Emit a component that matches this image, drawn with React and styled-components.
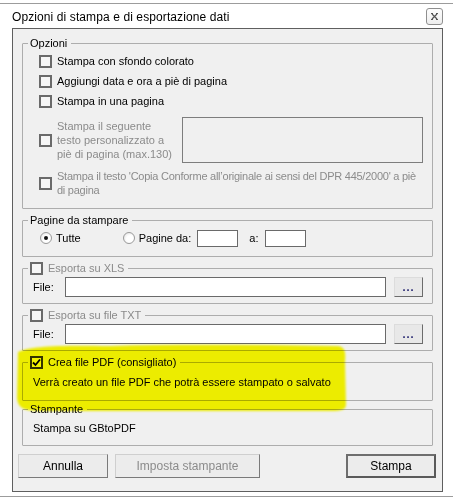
import styled, { createGlobalStyle } from "styled-components";

const GlobalStyle = createGlobalStyle`
  html, body {
    margin: 0;
    padding: 0;
    background: #ffffff;
  }
  body {
    font-family: "Liberation Sans", Arial, sans-serif;
    font-size: 11px;
    color: #000;
  }
`;

const Window = styled.div`
  position: relative;
  width: 453px;
  height: 499px;
  overflow: hidden;
  background: #ffffff;
  box-sizing: border-box;
  padding-top: 3px;
`;

const Frame = styled.div`
  border-top: 1px solid #9c9c9c;
  border-bottom: 1px solid #9c9c9c;
  padding-bottom: 4px;
`;

const TitleBar = styled.div`
  height: 24px;
  display: flex;
  align-items: center;
  padding: 0 10px 0 12px;
`;

const Title = styled.div`
  flex: 1;
  font-size: 12px;
  letter-spacing: 0.1px;
  color: #000;
  padding-top: 1px;
`;

const CloseBtn = styled.div`
  width: 15px;
  height: 15px;
  border: 1px solid #8f8f8f;
  border-radius: 3px;
  background: linear-gradient(#fdfdfd, #eeeeee);
  display: flex;
  align-items: center;
  justify-content: center;
  margin-top: 1px;
`;

const Panel = styled.div`
  margin: 0 10px 0 12px;
  height: 464px;
  box-sizing: border-box;
  border: 1px solid #5f5f5f;
  background: #f0f0f0;
  padding: 7px 9px 0 9px;
  display: flex;
  flex-direction: column;
`;

const Group = styled.fieldset`
  margin: 0 0 ${(p) => p.$gap ?? 4}px 0;
  padding: 0;
  min-width: 0;
  border: 1px solid #adadad;
  border-radius: 1px;
`;

const Legend = styled.legend`
  margin-left: 5px;
  padding: 0 4px 0 2px;
  height: 14px;
  line-height: 14px;
  display: flex;
  align-items: center;
  gap: 5px;
  color: ${(p) => (p.$disabled ? "#8b8b8b" : "#000")};
`;

const Body = styled.div`
  padding: ${(p) => p.$pad || "0 9px 0 10px"};
  display: flex;
  flex-direction: column;
`;

const Row = styled.div`
  display: flex;
  align-items: center;
  gap: ${(p) => p.$gap ?? 5}px;
  height: ${(p) => p.$h}px;
  margin-top: ${(p) => p.$mt ?? 0}px;
`;

const Label = styled.span`
  line-height: 14px;
  white-space: nowrap;
  color: ${(p) => (p.$disabled ? "#8b8b8b" : "#000")};
  width: ${(p) => (p.$w ? p.$w + "px" : "auto")};
  margin-left: ${(p) => p.$ml ?? 0}px;
  letter-spacing: ${(p) => p.$ls ?? 0}px;
`;

const Box = styled.span`
  flex: none;
  width: 13px;
  height: 13px;
  box-sizing: border-box;
  border: 2px solid ${(p) => (p.$checked ? "#333" : "#6a6a6a")};
  background: #f6f6f6;
  display: flex;
  align-items: center;
  justify-content: center;
`;

const Radio = styled.span`
  flex: none;
  width: 12px;
  height: 12px;
  box-sizing: border-box;
  border-radius: 50%;
  border: 1px solid #9a9a9a;
  background: radial-gradient(circle at 60% 60%, #ffffff 40%, #dcdcdc 100%);
  display: flex;
  align-items: center;
  justify-content: center;
  margin-left: ${(p) => p.$ml ?? 0}px;
  &::after {
    content: "";
    width: 4px;
    height: 4px;
    border-radius: 50%;
    background: ${(p) => (p.$on ? "#111" : "transparent")};
  }
`;

const Input = styled.span`
  flex: none;
  width: ${(p) => p.$w}px;
  height: ${(p) => p.$h}px;
  box-sizing: border-box;
  margin-left: ${(p) => p.$ml ?? 0}px;
  border: 1px solid ${(p) => (p.$disabled ? "#7d7d7d" : "#6a6a6a")};
  background: ${(p) => (p.$disabled ? "#f0f0f0" : "#ffffff")};
`;

const SmallBtn = styled.span`
  flex: none;
  width: 29px;
  height: 20px;
  box-sizing: border-box;
  margin-left: 8px;
  border: 1px solid #dcdcdc;
  border-right-color: #6c6c6c;
  border-bottom-color: #6c6c6c;
  background: #e8e8e8;
  display: flex;
  align-items: center;
  justify-content: center;
  font-weight: bold;
  letter-spacing: 1px;
  color: #1a1a6a;
  line-height: 8px;
`;

const Buttons = styled.div`
  display: flex;
  align-items: center;
  margin: 8px -3px 0 -4px;
  gap: 7px;
`;

const Button = styled.span`
  width: ${(p) => p.$w}px;
  height: 24px;
  box-sizing: border-box;
  border: 1px solid #cfcfcf;
  border-right-color: #7a7a7a;
  border-bottom-color: #7a7a7a;
  background: #ececec;
  display: flex;
  align-items: center;
  justify-content: center;
  font-size: 12px;
  color: ${(p) => (p.$disabled ? "#8b8b8b" : "#000")};
  margin-left: ${(p) => (p.$push ? "auto" : "0")};
  ${(p) =>
    p.$default &&
    `
    border: 2px solid #5a5a5a;
    border-top-color: #6e6e6e;
    border-left-color: #6e6e6e;
  `}
`;

const Highlight = styled.svg`
  position: absolute;
  left: 0;
  top: 0;
  width: 453px;
  height: 499px;
  pointer-events: none;
  mix-blend-mode: multiply;
`;

const Check = () => (
  <svg width="9" height="9" viewBox="0 0 9 9">
    <path d="M1 4.5 L3.5 7 L8 1.5" fill="none" stroke="#000" strokeWidth="1.8" />
  </svg>
);

const CheckBox = ({ checked }) => <Box $checked={checked}>{checked && <Check />}</Box>;

export default function App() {
  return (
    <>
      <GlobalStyle />
      <Window>
        <Frame>
          <TitleBar>
            <Title>Opzioni di stampa e di esportazione dati</Title>
            <CloseBtn>
              <svg width="7" height="7" viewBox="0 0 7 7">
                <path d="M1 1 L6 6 M6 1 L1 6" stroke="#555" strokeWidth="1.2" />
                <path d="M0 0.5 h2 M5 0.5 h2 M0 6.5 h2 M5 6.5 h2" stroke="#555" strokeWidth="1" />
              </svg>
            </CloseBtn>
          </TitleBar>

          <Panel>
            <Group $gap={4}>
              <Legend>Opzioni</Legend>
              <Body $pad="1px 9px 10px 16px">
                <Row $h={20}>
                  <CheckBox />
                  <Label>Stampa con sfondo colorato</Label>
                </Row>
                <Row $h={20}>
                  <CheckBox />
                  <Label>Aggiungi data e ora a piè di pagina</Label>
                </Row>
                <Row $h={20}>
                  <CheckBox />
                  <Label>Stampa in una pagina</Label>
                </Row>
                <Row $h={46} $mt={6}>
                  <CheckBox />
                  <Label $disabled $w={125}>
                    Stampa il seguente
                    <br />
                    testo personalizzato a
                    <br />
                    piè di pagina (max.130)
                  </Label>
                  <Input $w={241} $h={46} $disabled />
                </Row>
                <Row $h={30} $mt={5}>
                  <CheckBox />
                  <Label $disabled $ls={-0.25}>
                    Stampa il testo 'Copia Conforme all’originale ai sensi del DPR 445/2000' a piè
                    <br />
                    di pagina
                  </Label>
                </Row>
              </Body>
            </Group>

            <Group>
              <Legend>Pagine da stampare</Legend>
              <Body $pad="1px 9px 8px 17px">
                <Row $h={20} $gap={4}>
                  <Radio $on />
                  <Label>Tutte</Label>
                  <Radio $ml={38} />
                  <Label>Pagine da:</Label>
                  <Input $w={41} $h={17} $ml={2} />
                  <Label $ml={7}>a:</Label>
                  <Input $w={41} $h={17} $ml={3} />
                </Row>
              </Body>
            </Group>

            <Group>
              <Legend $disabled>
                <CheckBox />
                Esporta su XLS
              </Legend>
              <Body $pad="2px 9px 6px 10px">
                <Row $h={20} $gap={0}>
                  <Label $w={33}>File:</Label>
                  <Input $w={321} $h={20} />
                  <SmallBtn>...</SmallBtn>
                </Row>
              </Body>
            </Group>

            <Group>
              <Legend $disabled>
                <CheckBox />
                Esporta su file TXT
              </Legend>
              <Body $pad="2px 9px 6px 10px">
                <Row $h={20} $gap={0}>
                  <Label $w={33}>File:</Label>
                  <Input $w={321} $h={20} />
                  <SmallBtn>...</SmallBtn>
                </Row>
              </Body>
            </Group>

            <Group $gap={1}>
              <Legend>
                <CheckBox checked />
                Crea file PDF (consigliato)
              </Legend>
              <Body $pad="2px 9px 7px 10px">
                <Row $h={22}>
                  <Label>Verrà creato un file PDF che potrà essere stampato o salvato</Label>
                </Row>
              </Body>
            </Group>

            <Group $gap={0}>
              <Legend>Stampante</Legend>
              <Body $pad="1px 9px 6px 10px">
                <Row $h={22}>
                  <Label>Stampa su GBtoPDF</Label>
                </Row>
              </Body>
            </Group>

            <Buttons>
              <Button $w={90}>Annulla</Button>
              <Button $w={145} $disabled>
                Imposta stampante
              </Button>
              <Button $w={90} $push $default>
                Stampa
              </Button>
            </Buttons>
          </Panel>
        </Frame>

        <Highlight viewBox="0 0 453 499">
          <defs>
            <filter id="soft" x="-5%" y="-20%" width="110%" height="140%">
              <feGaussianBlur stdDeviation="1.2" />
            </filter>
          </defs>
          <path
            d="M18 352 C30 346 60 345 110 346 C180 344 260 345 338 346 C345 347 346 352 345 362 L346 404 C346 410 342 411 330 411 L40 411 C24 411 18 408 17 398 Z"
            fill="#fbfb00"
            filter="url(#soft)"
          />
        </Highlight>
      </Window>
    </>
  );
}
